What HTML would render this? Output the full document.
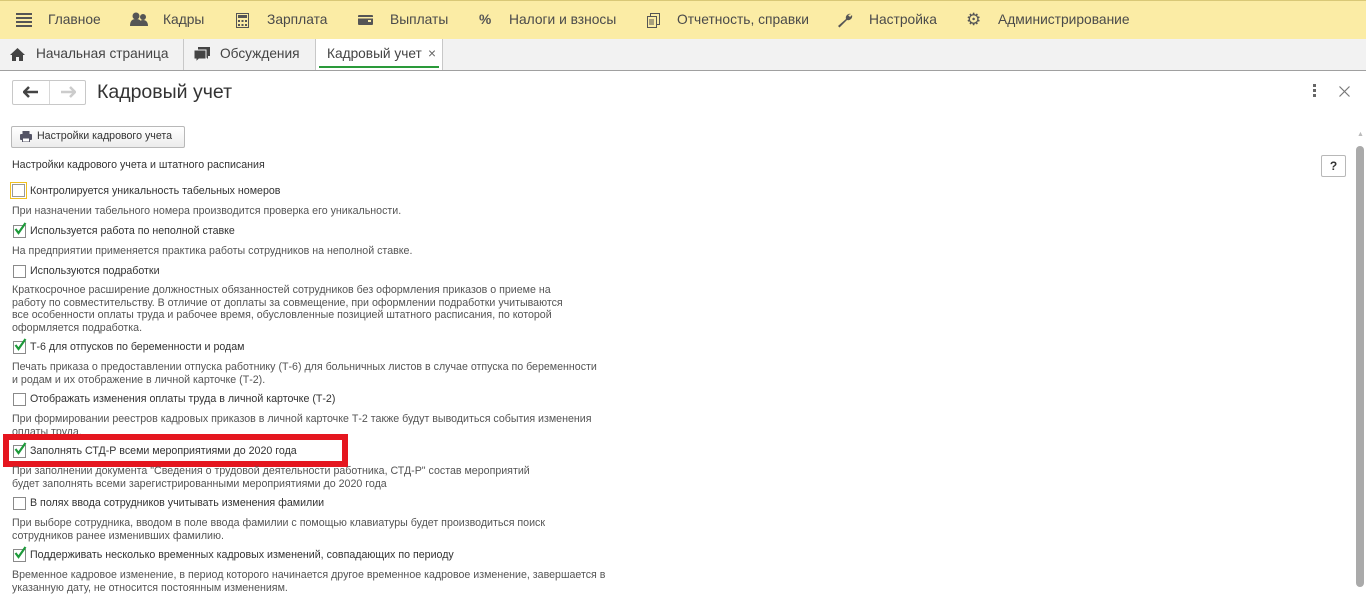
<!DOCTYPE html>
<html><head><meta charset="utf-8"><style>
body{margin:0;width:1366px;height:587px;overflow:hidden;background:#fff;font-family:"Liberation Sans",Arial,sans-serif;color:#333;position:relative}
.a{position:absolute;white-space:nowrap}
.top{position:absolute;left:0;top:0;width:1366px;height:38px;background:#fbeca5;border-top:1px solid #d9c877;border-bottom:1px solid #c8b878}
.top .a{font-size:13.8px;top:11px;color:#4a4a4a}
.tabs{position:absolute;left:0;top:39px;width:1366px;height:31px;background:#f2f2f2;border-bottom:1px solid #a0a0a0}
.tabs .a{font-size:13.7px;top:7px;color:#444}
.sep{position:absolute;top:0;width:1px;height:31px;background:#c8c8c8}
.cb{position:absolute;left:13px;width:11px;height:11px;border:1px solid #8a8a8a;background:#fff}
.ck{position:absolute;left:14px}
.lbl{font-size:10.65px;color:#333}
.d{font-size:10.65px;color:#555}
</style></head><body>
<div class="top">
<svg class="a" style="left:16px;top:12px" width="16" height="14"><g fill="#555"><rect y="0" width="16" height="2"/><rect y="4" width="16" height="2"/><rect y="8" width="16" height="2"/><rect y="12" width="16" height="2"/></g></svg>
<div class="a" style="left:48px">Главное</div>
<svg class="a" style="left:130px;top:11px" width="18" height="14"><g fill="#555"><circle cx="6" cy="4" r="3.5"/><path d="M0 14c0-5 2-7 6-7s6 2 6 7z"/><circle cx="13" cy="5" r="3"/><path d="M9 14c0-4 1-6 4-6s5 2 5 6z"/></g></svg>
<div class="a" style="left:163px">Кадры</div>
<svg class="a" style="left:236px;top:12px" width="13" height="15"><rect x="0.5" y="0.5" width="12" height="14" fill="none" stroke="#555"/><rect x="2" y="2" width="9" height="3" fill="#555"/><g fill="#555"><rect x="2" y="7" width="2" height="2"/><rect x="5.5" y="7" width="2" height="2"/><rect x="9" y="7" width="2" height="2"/><rect x="2" y="11" width="2" height="2"/><rect x="5.5" y="11" width="2" height="2"/><rect x="9" y="11" width="2" height="2"/></g></svg>
<div class="a" style="left:267px">Зарплата</div>
<svg class="a" style="left:358px;top:14px" width="15" height="10"><rect width="15" height="10" rx="1" fill="#555"/><rect x="0" y="2" width="15" height="1.5" fill="#fbeca5"/><rect x="10" y="5" width="3" height="2" fill="#fbeca5"/></svg>
<div class="a" style="left:390px">Выплаты</div>
<div class="a" style="left:479px;font-weight:bold;color:#555">%</div>
<div class="a" style="left:509px">Налоги и взносы</div>
<svg class="a" style="left:647px;top:12px" width="13" height="15"><g fill="none" stroke="#555"><rect x="3.5" y="0.5" width="9" height="11"/><rect x="0.5" y="3.5" width="9" height="11" fill="#fbeca5"/><path d="M2 7h5M2 9h5M2 11h5"/></g></svg>
<div class="a" style="left:677px">Отчетность, справки</div>
<svg class="a" style="left:837px;top:11px" width="16" height="16"><path d="M14 2a4 4 0 0 0-5 5L1 14l1.5 1.5 7.5-7.5a4 4 0 0 0 5-5l-2 2-2-2z" fill="#555"/></svg>
<div class="a" style="left:869px">Настройка</div>
<div class="a" style="left:966px;top:9px;font-size:17px;color:#555">⚙</div>
<div class="a" style="left:998px">Администрирование</div>
</div>
<div class="tabs">
<svg class="a" style="left:10px;top:9px" width="15" height="13"><path d="M7.5 0L0 7h2v6h4V9h3v4h4V7h2z" fill="#444"/></svg>
<div class="a" style="left:36px">Начальная страница</div>
<div class="sep" style="left:183px"></div>
<svg class="a" style="left:194px;top:8px" width="17" height="15"><path d="M4 0h12v9h-2v3l-3-3H4z" fill="#444"/><path d="M0 3h12v9H5l-3 3v-3H0z" fill="#444" stroke="#f2f2f2" stroke-width="1"/></svg>
<div class="a" style="left:220px">Обсуждения</div>
<div class="sep" style="left:315px"></div>
<div style="position:absolute;left:316px;top:0;width:126px;height:31px;background:#fff"></div>
<div class="a" style="left:327px">Кадровый учет</div>
<div class="a" style="left:428px;color:#666">×</div>
<div style="position:absolute;left:319px;top:27px;width:120px;height:2px;background:#2a9a3a"></div>
<div class="sep" style="left:442px"></div>
</div>
<div style="position:absolute;left:12px;top:80px;width:72px;height:23px;border:1px solid #c8c8c8;border-radius:2px;background:#fff"></div>
<div style="position:absolute;left:49px;top:81px;width:1px;height:23px;background:#d8d8d8"></div>
<svg class="a" style="left:23px;top:86px" width="16" height="12"><path d="M1 6h14M6 1L1 6l5 5" stroke="#444" stroke-width="2.5" fill="none"/></svg>
<svg class="a" style="left:60px;top:86px" width="16" height="12"><path d="M1 6h14M10 1l5 5-5 5" stroke="#ccc" stroke-width="2.5" fill="none"/></svg>
<div class="a" style="left:97px;top:81px;font-size:19.5px;color:#333">Кадровый учет</div>
<div class="a" style="left:1313px;top:84px;width:3px"><div style="width:3px;height:3px;background:#666;margin-bottom:2px"></div><div style="width:3px;height:3px;background:#666;margin-bottom:2px"></div><div style="width:3px;height:3px;background:#666"></div></div>
<svg class="a" style="left:1339px;top:86px" width="11" height="11"><path d="M0.5 0.5l10 10M10.5 0.5l-10 10" stroke="#777" stroke-width="1.2"/></svg>
<div style="position:absolute;left:11px;top:126px;width:172px;height:20px;border:1px solid #b8b8b8;border-radius:2px;background:linear-gradient(#fff,#ececec)"></div>
<svg class="a" style="left:20px;top:131px" width="12" height="11"><rect x="2.5" y="0" width="7" height="4" fill="#556"/><rect x="0" y="3" width="12" height="6" rx="1" fill="#556"/><rect x="2.5" y="7" width="7" height="4" fill="#fff" stroke="#556"/></svg>
<div class="a lbl" style="left:37px;top:130px">Настройки кадрового учета</div>
<div class="a lbl" style="left:12px;top:159px">Настройки кадрового учета и штатного расписания</div>
<div style="position:absolute;left:1321px;top:155px;width:23px;height:20px;border:1px solid #b8b8b8;border-radius:2px;background:#fff;font-size:12px;text-align:center;line-height:20px;font-weight:bold;color:#333">?</div>
<div class="a" style="left:1357px;top:131px;font-size:7px;color:#bbb">▲</div>
<div style="position:absolute;left:1356px;top:146px;width:8px;height:441px;background:#aaa;border-radius:4px"></div>

<div style="position:absolute;left:10px;top:182px;width:15px;height:15px;border:1px solid #f0c020;background:#fff"></div>
<div class="cb" style="left:12px;top:184px;border-color:#999"></div>
<div class="a lbl" style="left:30px;top:185px">Контролируется уникальность табельных номеров</div>
<div class="a d" style="left:12px;top:205px">При назначении табельного номера производится проверка его уникальности.</div>

<div class="cb" style="top:225px"></div><svg class="ck" style="top:222px" width="13" height="13"><path d="M1.5 7l3 4 7-10" stroke="#1d9a3a" stroke-width="2.2" fill="none"/></svg>
<div class="a lbl" style="left:30px;top:225px">Используется работа по неполной ставке</div>
<div class="a d" style="left:12px;top:245px">На предприятии применяется практика работы сотрудников на неполной ставке.</div>

<div class="cb" style="top:265px"></div>
<div class="a lbl" style="left:30px;top:265px">Используются подработки</div>
<div class="a d" style="left:12px;top:284px;line-height:12.5px">Краткосрочное расширение должностных обязанностей сотрудников без оформления приказов о приеме на<br>работу по совместительству. В отличие от доплаты за совмещение, при оформлении подработки учитываются<br>все особенности оплаты труда и рабочее время, обусловленные позицией штатного расписания, по которой<br>оформляется подработка.</div>

<div class="cb" style="top:341px"></div><svg class="ck" style="top:338px" width="13" height="13"><path d="M1.5 7l3 4 7-10" stroke="#1d9a3a" stroke-width="2.2" fill="none"/></svg>
<div class="a lbl" style="left:30px;top:341px">Т-6 для отпусков по беременности и родам</div>
<div class="a d" style="left:12px;top:361px;line-height:12.5px">Печать приказа о предоставлении отпуска работнику (Т-6) для больничных листов в случае отпуска по беременности<br>и родам и их отображение в личной карточке (Т-2).</div>

<div class="cb" style="top:393px"></div>
<div class="a lbl" style="left:30px;top:393px">Отображать изменения оплаты труда в личной карточке (Т-2)</div>
<div class="a d" style="left:12px;top:413px;line-height:12.5px">При формировании реестров кадровых приказов в личной карточке Т-2 также будут выводиться события изменения<br>оплаты труда.</div>

<div style="position:absolute;left:3px;top:434px;width:333px;height:21px;border:6px solid #e5161f;background:#fff"></div>
<div class="cb" style="top:445px"></div><svg class="ck" style="top:442px" width="13" height="13"><path d="M1.5 7l3 4 7-10" stroke="#1d9a3a" stroke-width="2.2" fill="none"/></svg>
<div class="a lbl" style="left:30px;top:445px">Заполнять СТД-Р всеми мероприятиями до 2020 года</div>
<div class="a d" style="left:12px;top:465px;line-height:12.5px">При заполнении документа "Сведения о трудовой деятельности работника, СТД-Р" состав мероприятий<br>будет заполнять всеми зарегистрированными мероприятиями до 2020 года</div>

<div class="cb" style="top:497px"></div>
<div class="a lbl" style="left:30px;top:497px">В полях ввода сотрудников учитывать изменения фамилии</div>
<div class="a d" style="left:12px;top:517px;line-height:12.5px">При выборе сотрудника, вводом в поле ввода фамилии с помощью клавиатуры будет производиться поиск<br>сотрудников ранее изменивших фамилию.</div>

<div class="cb" style="top:549px"></div><svg class="ck" style="top:546px" width="13" height="13"><path d="M1.5 7l3 4 7-10" stroke="#1d9a3a" stroke-width="2.2" fill="none"/></svg>
<div class="a lbl" style="left:30px;top:549px">Поддерживать несколько временных кадровых изменений, совпадающих по периоду</div>
<div class="a d" style="left:12px;top:569px;line-height:12.5px">Временное кадровое изменение, в период которого начинается другое временное кадровое изменение, завершается в<br>указанную дату, не относится постоянным изменениям.</div>
</body></html>
